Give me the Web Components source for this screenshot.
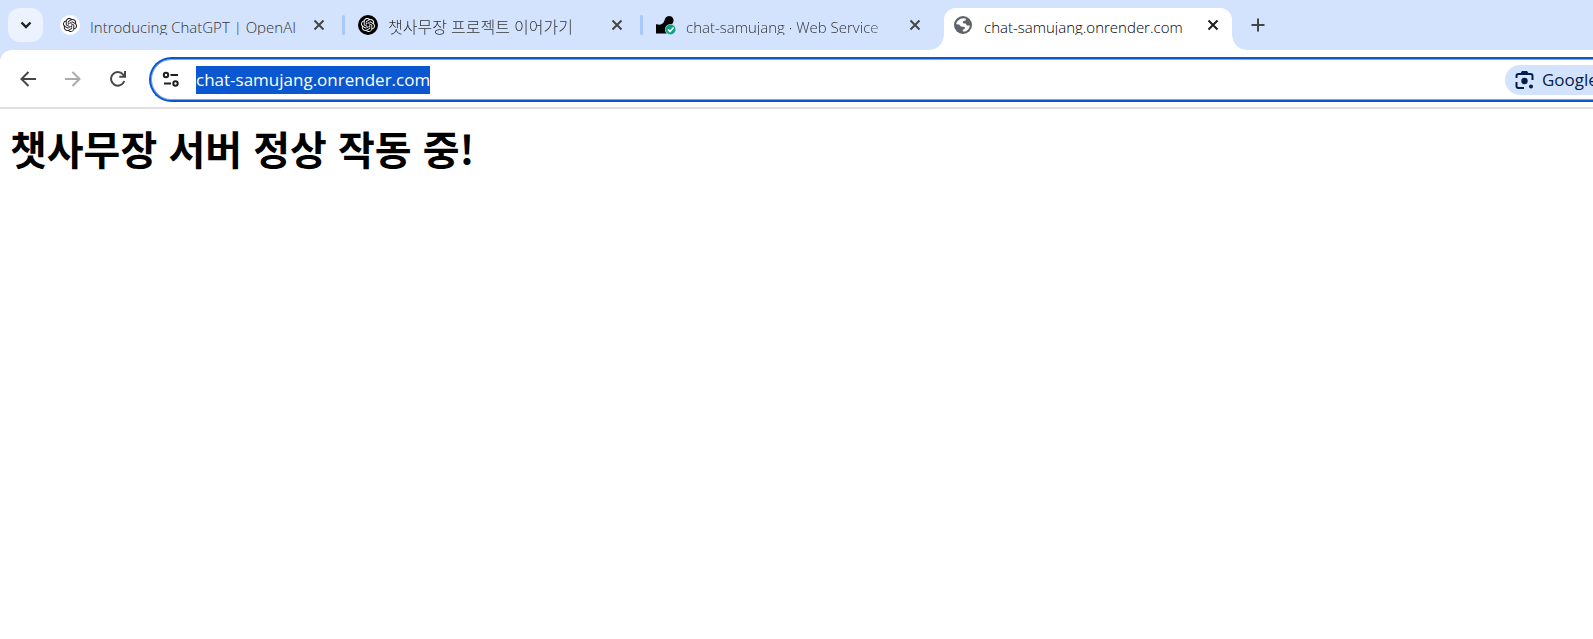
<!DOCTYPE html>
<html lang="ko">
<head>
<meta charset="utf-8">
<title>chat-samujang.onrender.com</title>
<style>
body { margin: 0; background: #fff; color: #000; font-family: "Open Sans", "Noto Sans CJK KR", sans-serif; }
</style>
</head>
<body>
<browser-window>
  <tab-strip slot="tabs">
    <browser-tab icon="openai">Introducing ChatGPT | OpenAI</browser-tab>
    <browser-tab icon="openai-dark" lang="ko" separated>챗사무장 프로젝트 이어가기</browser-tab>
    <browser-tab icon="service" separated>chat-samujang · Web Service</browser-tab>
    <browser-tab icon="globe" active>chat-samujang.onrender.com</browser-tab>
  </tab-strip>
  <tool-bar slot="toolbar">
    <address-bar value="chat-samujang.onrender.com"></address-bar>
  </tool-bar>
  <status-page>챗사무장 서버 정상 작동 중!</status-page>
</browser-window>

<script>
const knot = '<path fill="currentColor" fill-rule="evenodd" d="M22.2819 9.8211a5.9847 5.9847 0 0 0-.5157-4.9108 6.0462 6.0462 0 0 0-6.5098-2.9A6.0651 6.0651 0 0 0 4.9807 4.1818a5.9847 5.9847 0 0 0-3.9977 2.9 6.0462 6.0462 0 0 0 .7427 7.0966 5.98 5.98 0 0 0 .511 4.9107 6.051 6.051 0 0 0 6.5146 2.9001A5.9847 5.9847 0 0 0 13.2599 24a6.0557 6.0557 0 0 0 5.7718-4.2058 5.9894 5.9894 0 0 0 3.9977-2.9001 6.0557 6.0557 0 0 0-.7475-7.0729zm-9.022 12.6081a4.4755 4.4755 0 0 1-2.8764-1.0408l.1419-.0804 4.7783-2.7582a.7948.7948 0 0 0 .3927-.6813v-6.7369l2.02 1.1686a.071.071 0 0 1 .038.052v5.5826a4.504 4.504 0 0 1-4.4945 4.4944zm-9.6607-4.1254a4.4708 4.4708 0 0 1-.5346-3.0137l.142.0852 4.783 2.7582a.7712.7712 0 0 0 .7806 0l5.8428-3.3685v2.3324a.0804.0804 0 0 1-.0332.0615L9.74 19.9502a4.4992 4.4992 0 0 1-6.1408-1.6464zM2.3408 7.8956a4.485 4.485 0 0 1 2.3655-1.9728V11.6a.7664.7664 0 0 0 .3879.6765l5.8144 3.3543-2.0201 1.1685a.0757.0757 0 0 1-.071 0l-4.8303-2.7865A4.504 4.504 0 0 1 2.3408 7.872zm16.5963 3.8558L13.1038 8.364 15.1192 7.2a.0757.0757 0 0 1 .071 0l4.8303 2.7913a4.4944 4.4944 0 0 1-.6765 8.1042v-5.6772a.79.79 0 0 0-.407-.667zm2.0107-3.0231l-.142-.0852-4.7735-2.7818a.7759.7759 0 0 0-.7854 0L9.409 9.2297V6.8974a.0662.0662 0 0 1 .0284-.0615l4.8303-2.7866a4.4992 4.4992 0 0 1 6.6802 4.66zM8.3065 12.863l-2.02-1.1638a.0804.0804 0 0 1-.038-.0567V6.0742a4.4992 4.4992 0 0 1 7.3757-3.4537l-.142.0805L8.704 5.459a.7948.7948 0 0 0-.3927.6813zm1.0976-2.3654l2.602-1.4998 2.6069 1.4998v2.9994l-2.5974 1.4997-2.6067-1.4997Z"/>';
const icons = {
  'openai': `<svg viewBox="0 0 20 20"><circle cx="10" cy="10" r="10" fill="#fff"/><svg x="3" y="3" width="14" height="14" viewBox="0 0 24 24" color="#111">${knot}</svg></svg>`,
  'openai-dark': `<svg viewBox="0 0 20 20"><circle cx="10" cy="10" r="10" fill="#000"/><svg x="3" y="3" width="14" height="14" viewBox="0 0 24 24" color="#fff">${knot}</svg></svg>`,
  'service': '<svg viewBox="0 0 20 20"><path fill="#000" d="M0 9.500c1.500-.8 2.500.6 4 .2 2.500-.6 4.300-2.400 4.600-4.700a4.500 4.500 0 1 1 7 4.200L12 18.500H0z"/><circle cx="14.500" cy="14.500" r="5.500" fill="#d3e3fd"/><circle cx="14.500" cy="14.500" r="5" fill="#10a37f"/><path d="m12 14.500 2 2 3.500-4" fill="none" stroke="#fff" stroke-width="1.600"/></svg>',
  'globe': '<svg viewBox="0 0 20 20"><circle cx="9" cy="10" r="9" fill="#5f6368"/><path transform="translate(0 1)" fill="#fff" d="M9.500 2.200 12 2.800 11.500 4.500 9 5.300 8.800 7.200 11.500 7.500 13 9.500 15.800 9.500C15.500 13 13 15.500 9.500 15.800L8.500 14 11 12.500 10.500 11 7 10.500 5 8.500 2.200 8.200C2.700 5 5.500 2.400 9.500 2.200z"/></svg>'
};

function define(name, html, setup) {
  const template = document.createElement('template');
  template.innerHTML = html;
  customElements.define(name, class extends HTMLElement {
    connectedCallback() {
      if (this.shadowRoot) return;
      this.attachShadow({ mode: 'open' }).append(template.content.cloneNode(true));
      if (setup) setup.call(this, this.shadowRoot);
    }
  });
}

define('browser-window', `
<style>
  :host { display: block; min-height: 100vh; overflow: hidden; background: #fff; }
  header { background: #d3e3fd; }
</style>
<header><slot name="tabs"></slot><slot name="toolbar"></slot></header>
<main><slot></slot></main>`);

define('tab-strip', `
<style>
  :host { display: flex; height: 50px; padding-left: 8px; box-sizing: border-box; }
  button { border: 0; padding: 0; display: grid; place-items: center; color: #1f1f1f; flex: none; }
  .search { width: 35px; height: 34px; margin: 8px 7px 0 0; border-radius: 12px; background: #ecf2fe; }
  .add { width: 34px; height: 34px; margin: 8px 0 0 9px; border-radius: 17px; background: none; color: #444746; }
  svg { display: block; fill: none; stroke: currentColor; }
</style>
<button class="search" aria-label="Search tabs"><svg width="12" height="8" viewBox="0 0 12 8" stroke-width="2.400"><path d="m1.500 1.500 4.500 4.500 4.500-4.500"/></svg></button>
<slot></slot>
<button class="add" aria-label="New tab"><svg width="14" height="14" viewBox="0 0 14 14" stroke-width="2"><path d="M7 .5v13M.5 7h13"/></svg></button>`);

define('browser-tab', `
<style>
  :host { display: flex; flex: none; width: 298px; color: #333; }
  .tab { position: relative; display: flex; align-items: center; box-sizing: border-box; width: 288px; margin-top: 8px; padding: 0 9px 8px 10px; border-radius: 12px 12px 0 0; }
  .rule { width: 3px; height: 20px; margin: 15px 3px 0 4px; border-radius: 2px; }
  :host([divided]) .rule { background: #a8c7fa; }
  .icon, .icon > svg { display: block; width: 20px; height: 20px; flex: none; }
  .title { flex: 1; margin-left: 10px; height: 20px; font: 300 15px/24px "Open Sans", "Noto Sans CJK KR", sans-serif; white-space: nowrap; overflow: hidden; mask-image: linear-gradient(90deg, #000 180px, transparent 214px); }
  :host([lang="ko"]) .title { font-size: 16px; }
  :host(:first-child) .title { mask-image: none; }
  button { flex: none; width: 20px; height: 20px; margin-left: 1px; padding: 0; border: 0; background: none; color: #444746; display: grid; place-items: center; }
  button svg { display: block; fill: none; stroke: currentColor; stroke-width: 2; }
  :host([active]) { width: 288px; color: #000; }
  :host([active]) .rule { display: none; }
  :host([active]) .title { mask-image: none; }
  :host([active]) button { color: #1f1f1f; }
  :host([active]) .tab { background: #fff; }
  :host([active]) .tab::before, :host([active]) .tab::after { content: ""; position: absolute; bottom: 0; width: 14px; height: 14px; }
  :host([active]) .tab::before { left: -14px; background: radial-gradient(circle at 0 0, transparent 13px, #fff 14px); }
  :host([active]) .tab::after { right: -14px; background: radial-gradient(circle at 100% 0, transparent 13px, #fff 14px); }
</style>
<div class="tab"><span class="icon"></span><span class="title"><slot></slot></span><button aria-label="Close tab"><svg width="12" height="12" viewBox="0 0 12 12"><path d="m1.500 1.500 9 9m0-9-9 9"/></svg></button></div><span class="rule"></span>`,
function (root) {
  root.querySelector('.icon').innerHTML = icons[this.getAttribute('icon')];
  const next = this.nextElementSibling;
  if (next && next.hasAttribute('separated')) this.setAttribute('divided', '');
});

define('tool-bar', `
<style>
  :host { display: flex; align-items: center; height: 59px; box-sizing: border-box; padding: 2px 0 0 10px; background: #fff; border-bottom: 2px solid #e1e1e1; border-radius: 12px 0 0 0; }
  button { flex: none; width: 35px; height: 36px; margin-right: 10px; padding: 0 0 2px; border: 0; background: none; color: #474747; display: grid; place-items: center; }
  button:disabled { color: #ababab; }
  svg { display: block; fill: none; stroke: currentColor; stroke-width: 2; }
  slot { display: block; flex: 1; }
</style>
<button aria-label="Back"><svg width="16" height="16" viewBox="0 0 16 16"><path d="M8.500 1 1.500 8l7 7M1.500 8H16"/></svg></button>
<button aria-label="Forward" disabled><svg width="16" height="16" viewBox="0 0 16 16"><path d="m7.500 1 7 7-7 7M14.500 8H0"/></svg></button>
<button aria-label="Reload"><svg width="16" height="16" viewBox="0 0 16 16"><path d="M14.300 10A6.800 6.800 0 1 1 13 3.400L15 5.500M15 0v5.800H9.300"/></svg></button>
<slot></slot>`);

define('address-bar', `
<style>
  :host { display: flex; align-items: center; flex: 1; height: 45px; margin-left: 4px; box-sizing: border-box; border: 2px solid #0b57d0; border-right: 0; border-radius: 23px 0 0 23px; box-shadow: inset 0 1px #7ba6e8, inset 0 -1px #7ba6e8, inset 1px 0 #7ba6e8; overflow: hidden; background: #fff; }
  .site { flex: none; width: 18px; height: 18px; margin: 0 16px 0 11px; padding: 0; border: 0; background: none; color: #1f1f1f; }
  svg { display: block; fill: none; stroke: currentColor; stroke-width: 2; }
  input { flex: 1; min-width: 0; height: 28px; padding: 0; border: 0; outline: 0; background: none; color: #1f1f1f; font: 17px/28px "Open Sans", sans-serif; }
  input::selection { background: #0b57d0; color: #fff; }
  .lens { flex: none; display: flex; align-items: center; gap: 8px; width: 88px; height: 30px; padding: 0 0 0 10px; border: 0; border-radius: 15px 0 0 15px; overflow: hidden; background: #d3e3fd; color: #041e49; font: 17px/28px "Open Sans", sans-serif; }
  .lens svg { flex: none; }
</style>
<button class="site" aria-label="Site information"><svg width="18" height="18" viewBox="0 0 18 18"><circle cx="4" cy="4" r="2.200"/><path d="M8.500 4H16M2 12.500h7"/><circle cx="13.500" cy="12.500" r="2.200"/></svg></button>
<input type="text" aria-label="Address" spellcheck="false">
<button class="lens"><svg width="19" height="20" viewBox="0 0 19 20"><path d="M1.500 8V6q0-2 2-2h12q2 0 2 2v4M1.500 12v4q0 2 2 2H9"/><path d="M6.500 3.500 7.500 2h4l1 1.500" fill="currentColor"/><circle cx="9.500" cy="11" r="3.200" fill="currentColor" stroke="none"/><circle cx="16" cy="16.500" r="2" fill="currentColor" stroke="none"/></svg>Google</button>`,
function (root) {
  const input = root.querySelector('input');
  input.value = this.getAttribute('value');
  input.focus();
  input.select();
});

define('status-page', `
<style>
  :host { display: block; padding: 10px; }
  h1 { margin: 0; font: 700 40px/58px "Noto Sans CJK KR", sans-serif; }
</style>
<h1><slot></slot></h1>`);
</script>
</body>
</html>
